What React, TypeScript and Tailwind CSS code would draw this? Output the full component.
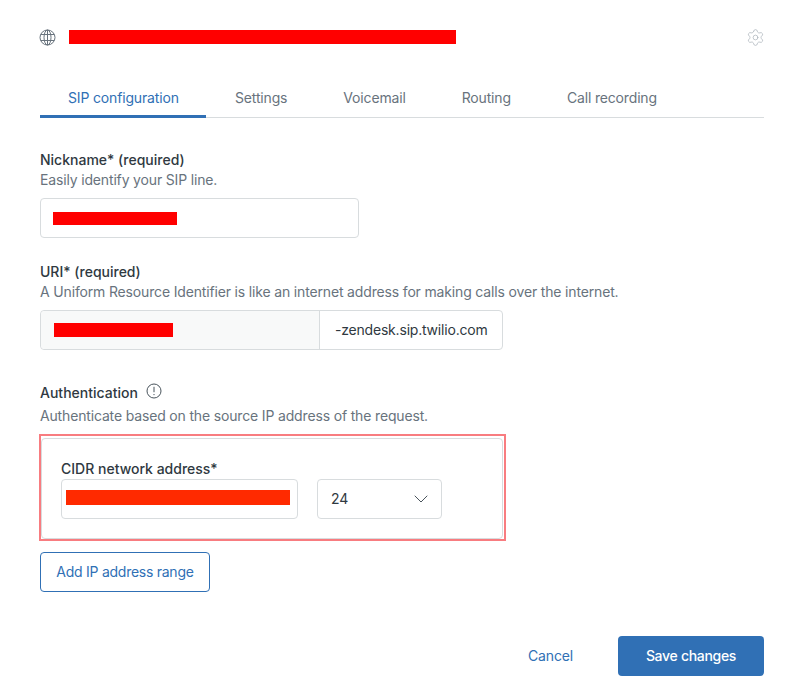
import { ChevronDown, Settings } from 'lucide-react';

const tabs = ['SIP configuration', 'Settings', 'Voicemail', 'Routing', 'Call recording'];

function GlobeIcon() {
  return (
    <svg width="17" height="17" viewBox="0 0 17 17" fill="none" stroke="#68737d" strokeWidth="1" className="-ml-px">
      <circle cx="8.5" cy="8.5" r="7.5" />
      <ellipse cx="8.5" cy="8.5" rx="3.5" ry="7.5" />
      <path d="M8.5 1v15M1.7 5.5h13.6M1.7 11.5h13.6" />
    </svg>
  );
}

function InfoIcon() {
  return (
    <svg width="16" height="16" viewBox="0 0 16 16" fill="none" stroke="#49545c" strokeWidth="1" className="-mt-1">
      <circle cx="8" cy="8" r="7" />
      <path d="M8 3.8v5.4" />
      <circle cx="8" cy="11.6" r="0.7" fill="#49545c" stroke="none" />
    </svg>
  );
}

export default function App() {
  return (
    <div className="w-[802px] h-[693px] bg-white pl-10 pr-[38px] pt-[29px] text-sm tracking-[-0.16px] text-[#2f3941] font-['Inter',sans-serif] overflow-hidden">
      <div className="flex items-center justify-between h-4">
        <div className="flex items-center gap-[13px]">
          <GlobeIcon />
          <div className="w-[387px] h-3.5 bg-[#ff0000]" />
        </div>
        <Settings size={19} strokeWidth={0.9} className="text-[#a9b2b8] -mr-px" />
      </div>

      <div className="flex mt-[29px] h-[44px] border-b border-[#d8dcde]">
        {tabs.map((tab, i) => (
          <div
            key={tab}
            className={`px-7 flex items-center h-[44px] border-b-[3px] pt-[7px] ${i === 0 ? 'w-[166px] mr-px whitespace-nowrap text-[#3070b5] border-[#3070b5]' : 'text-[#68737d] border-transparent'}`}
          >
            {tab}
          </div>
        ))}
      </div>

      <div className="mt-[32px]">
        <div className="font-medium leading-5 tracking-normal">Nickname* (required)</div>
        <div className="text-[#68737d] leading-5">Easily identify your SIP line.</div>
        <div className="mt-2 w-[319px] h-10 border border-[#d8dcde] rounded flex items-center pl-3">
          <div className="w-[124px] h-[13px] bg-[#ff0000]" />
        </div>
      </div>

      <div className="mt-6">
        <div className="font-medium leading-5 tracking-normal">URI* (required)</div>
        <div className="text-[#68737d] leading-5">A Uniform Resource Identifier is like an internet address for making calls over the internet.</div>
        <div className="mt-2 w-[463px] h-10 border border-[#d8dcde] rounded flex">
          <div className="w-[279px] bg-[#f8f9f9] flex items-center pl-[13px] border-r border-[#d8dcde] rounded-l">
            <div className="w-[119px] h-3.5 bg-[#ff0000]" />
          </div>
          <div className="flex-1 flex items-center pl-[15px] tracking-[-0.2px]">-zendesk.sip.twilio.com</div>
        </div>
      </div>

      <div className="mt-[33px]">
        <div className="flex items-center gap-2 leading-5">
          <span className="font-medium tracking-normal">Authentication</span>
          <InfoIcon />
        </div>
        <div className="text-[#68737d] leading-5 mt-[3px]">Authenticate based on the source IP address of the request.</div>
      </div>

      <div className="-ml-px mt-2 w-[467px] h-[107px] border-2 border-[#f87c80] pt-0.5 pr-px">
        <div className="h-[101px] border border-[#d8dcde] rounded-sm pl-[19px] pt-[21px]">
          <div className="font-medium leading-5 -mt-px tracking-normal">CIDR network address*</div>
          <div className="flex gap-[19px]">
            <div className="w-[237px] h-10 border border-[#d8dcde] rounded flex items-center pl-1">
              <div className="w-[224px] h-[15px] bg-[#ff2a00] mb-1" />
            </div>
            <div className="w-[125px] h-10 border border-[#d8dcde] rounded flex items-center justify-between pl-[13px] pr-[8px]">
              <span>24</span>
              <ChevronDown size={24} strokeWidth={1} className="text-[#49545c]" />
            </div>
          </div>
        </div>
      </div>

      <button className="mt-[11px] block w-[170px] h-10 border border-[#3070b5] rounded text-[#3070b5] tracking-[-0.26px]">
        Add IP address range
      </button>

      <div className="mt-[44px] flex justify-end items-center gap-[45px]">
        <button className="text-[#3070b5]">Cancel</button>
        <button className="w-[146px] h-10 bg-[#3070b5] rounded text-white font-medium tracking-[-0.3px]">Save changes</button>
      </div>
    </div>
  );
}
